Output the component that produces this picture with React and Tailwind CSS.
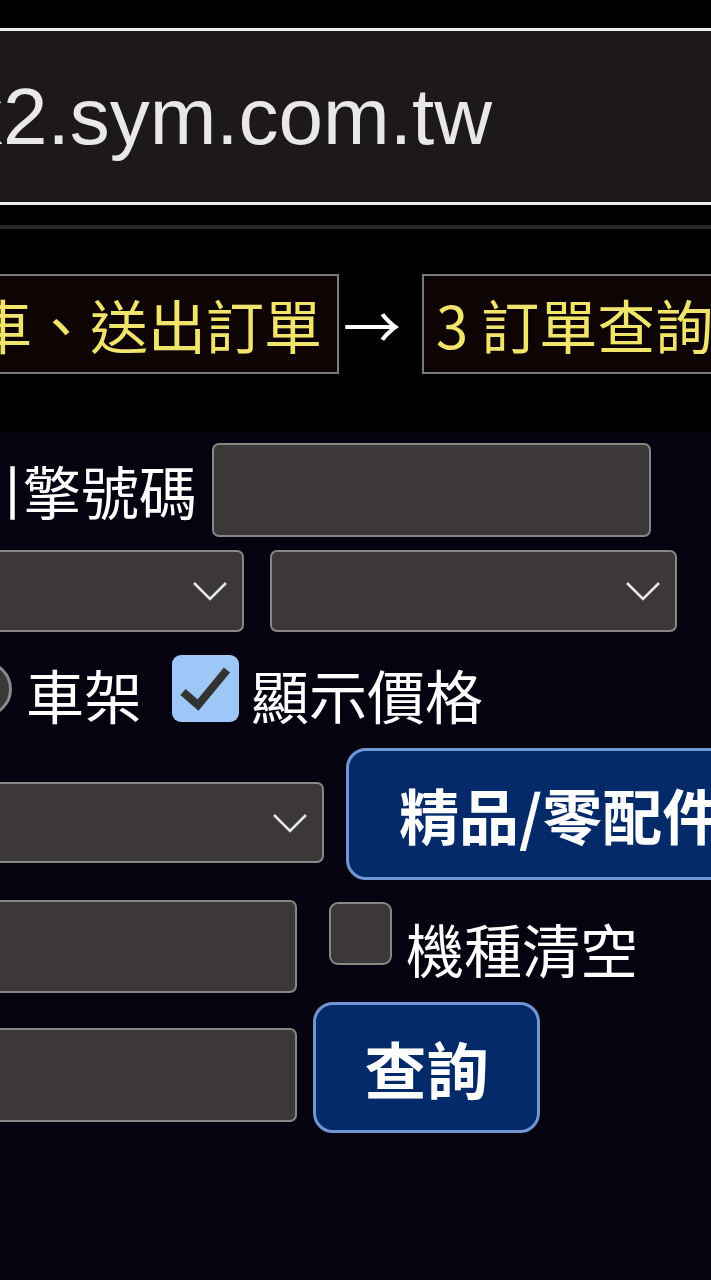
const cjk = { fontFamily: '"Noto Sans CJK TC", "Noto Sans", sans-serif' };

function Chevron() {
  return <svg width="36" height="20" viewBox="0 0 36 20" className="shrink-0">
    <path d="M2 2 L18 18 L34 2" fill="none" stroke="#e6e6e6" strokeWidth="2.6" />
  </svg>;
}

function Select({ className }) {
  return <div className={`flex shrink-0 items-center justify-end rounded-[7px] border-2 border-[#878787] bg-[#3b3837] pr-[14px] ${className}`}>
    <Chevron />
  </div>;
}

function Field({ className }) {
  return <div className={`shrink-0 rounded-[7px] border-2 border-[#878787] bg-[#3b3837] ${className}`} />;
}

function BlueButton({ children, className }) {
  return <div className={`flex shrink-0 items-center rounded-[20px] border-[3px] border-[#7097d4] bg-[#052a6a] font-bold text-white ${className}`}>
    {children}
  </div>;
}

export default function App() {
  return <div className="flex h-[1280px] w-[711px] flex-col overflow-hidden bg-black" style={cjk}>
    {/* address bar */}
    <div className="pt-[28px]">
      <div className="-mx-[10px] flex h-[177px] items-center overflow-hidden border-y-[3px] border-[#eeeeee] bg-[#1d1919]">
        <span className="ml-[-27px] whitespace-nowrap text-[80px] leading-none text-[#e8e8e8]" style={{ fontFamily: '"Liberation Sans", Arial, sans-serif' }}>x2.sym.com.tw</span>
      </div>
    </div>
    <div className="mt-[20px] h-[4px] bg-[#2a2622]" />

    {/* steps */}
    <div className="flex h-[203px] items-start pt-[45px] text-[58px] leading-none">
      <div className="flex w-[339px] shrink-0 justify-end">
        <div className="flex h-[100px] shrink-0 items-center whitespace-nowrap border-2 border-[#7a7a7a] bg-[#0e0404] pl-[14px] pr-[15px] text-[#f0e56a]">購物車、送出訂單</div>
      </div>
      <div className="flex h-[100px] items-center">
        <span className="ml-[4px] mr-[21px] text-white">→</span>
      </div>
      <div className="flex h-[100px] shrink-0 items-center whitespace-nowrap border-2 border-[#7a7a7a] bg-[#0e0404] pl-[12px] pr-[16px] text-[#f0e56a]">3 訂單查詢</div>
    </div>

    {/* form */}
    <div className="flex-1 bg-[#05030f] text-[58px] leading-none text-white">
      <div className="mt-[11px] flex items-center">
        <div className="flex w-[197px] shrink-0 justify-end">
          <span className="whitespace-nowrap">引擎號碼</span>
        </div>
        <Field className="ml-[15px] h-[94px] w-[439px]" />
      </div>

      <div className="mt-[13px] flex">
        <Select className="ml-[-56px] h-[82px] w-[300px]" />
        <Select className="ml-[26px] h-[82px] w-[407px]" />
      </div>

      <div className="mt-[23px] flex h-[67px] items-center">
        <div className="ml-[-44px] h-[56px] w-[56px] shrink-0 rounded-full border-[3px] border-[#8a8a8a] bg-[#3b3837]" />
        <span className="ml-[14px] mt-[10px] whitespace-nowrap">車架</span>
        <div className="relative ml-[30px] h-[67px] w-[67px] shrink-0 rounded-[9px] bg-[#9ec6f7]">
          <svg width="67" height="67" viewBox="0 0 67 67" className="absolute inset-0">
            <path d="M11 37 L26 50 L55 15" fill="none" stroke="#333333" strokeWidth="8" strokeLinejoin="miter" />
          </svg>
        </div>
        <span className="ml-[12px] mt-[10px] whitespace-nowrap">顯示價格</span>
      </div>

      <div className="mt-[26px] flex items-start">
        <Select className="ml-[-40px] mt-[34px] h-[81px] w-[364px]" />
        <BlueButton className="ml-[22px] h-[132px] whitespace-nowrap pl-[50px] pr-[40px] text-[60px]">精品/零配件查詢</BlueButton>
      </div>

      <div className="mt-[20px] flex items-start">
        <Field className="ml-[-40px] h-[93px] w-[337px]" />
        <div className="ml-[32px] mt-[2px] h-[63px] w-[63px] shrink-0 rounded-[9px] border-2 border-[#878787] bg-[#3b3837]" />
        <span className="ml-[14px] mt-[19px] whitespace-nowrap">機種清空</span>
      </div>

      <div className="mt-[9px] flex items-start">
        <Field className="ml-[-40px] mt-[26px] h-[94px] w-[337px]" />
        <BlueButton className="ml-[16px] h-[131px] w-[227px] justify-center text-[62px]">查詢</BlueButton>
      </div>
    </div>
  </div>;
}
